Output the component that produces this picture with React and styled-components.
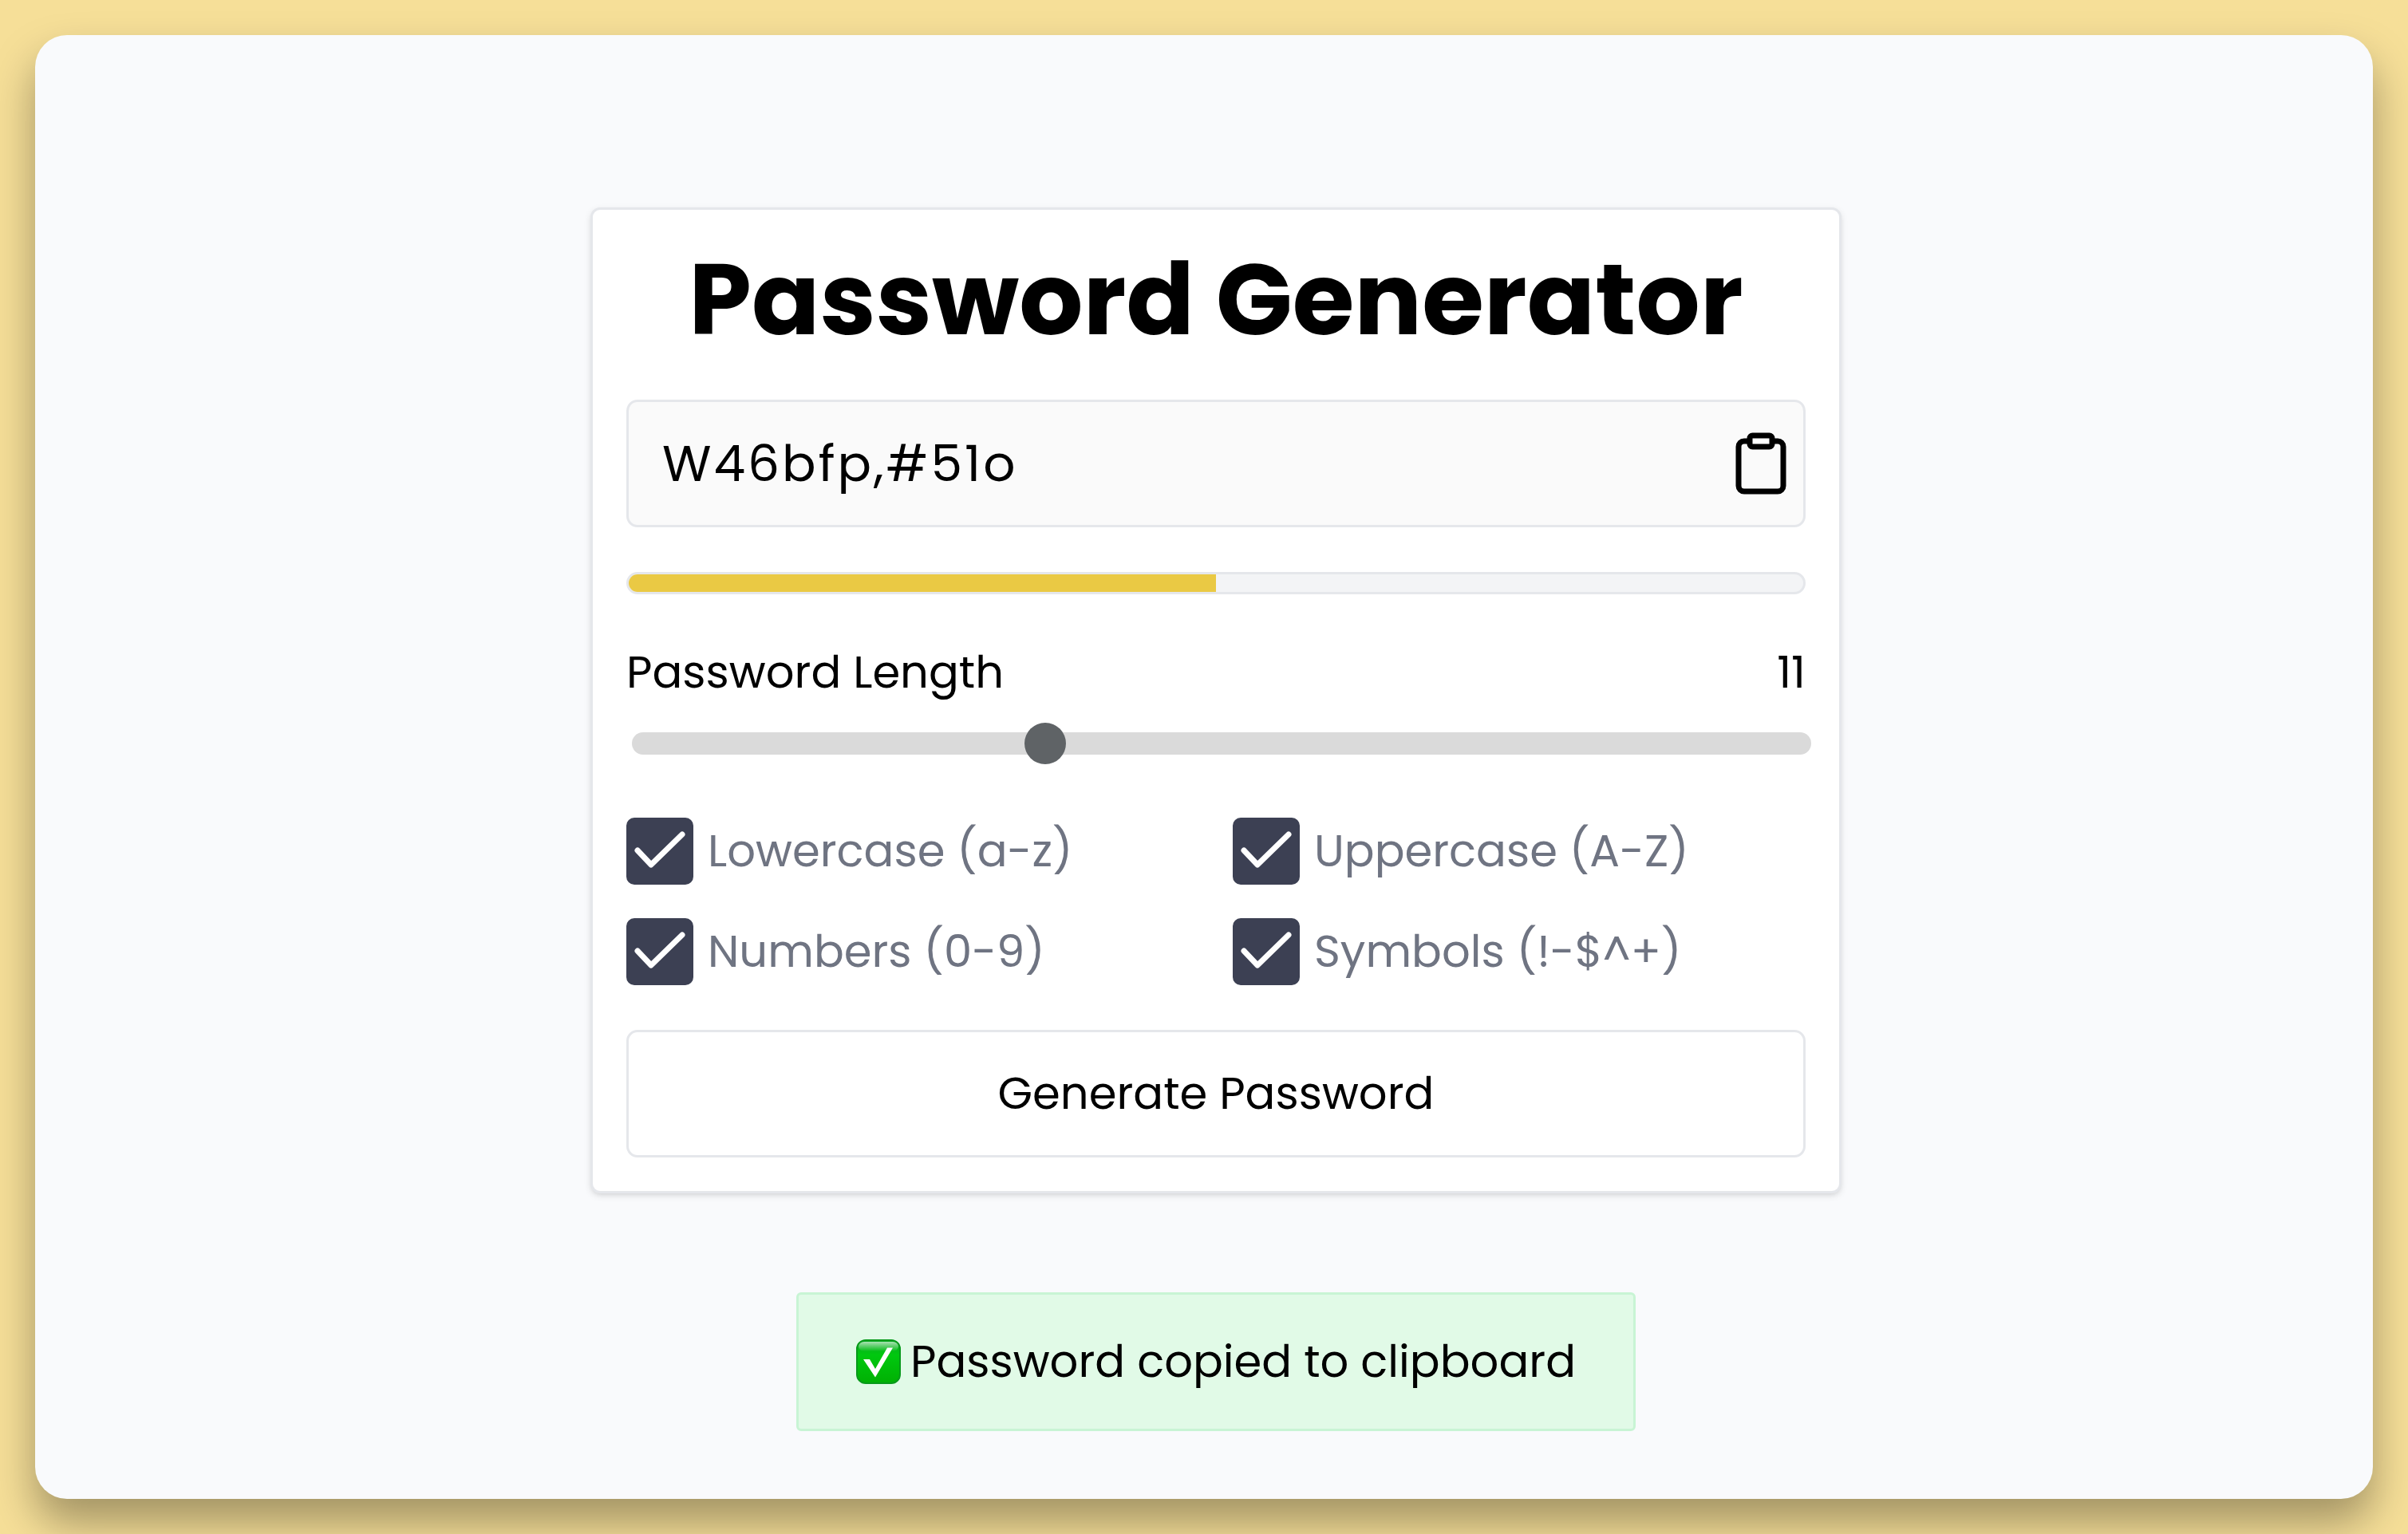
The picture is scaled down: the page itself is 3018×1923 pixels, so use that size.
import React, { useState } from "react";
import styled, { createGlobalStyle } from "styled-components";

const font = `Poppins, Inter, "Open Sans", sans-serif`;

const GlobalStyle = createGlobalStyle`
  *, *::before, *::after { box-sizing: border-box; }
  body { margin: 0; background: #f6df98; color: #000; font-family: ${font}; font-size: 56px; line-height: 84px; }
  button, input { font: inherit; color: inherit; }
`;

const Page = styled.div`
  min-height: 100vh;
  padding: 44px;
  display: flex;
`;

const Panel = styled.main`
  flex: 1;
  display: flex;
  flex-direction: column;
  align-items: center;
  gap: 124px;
  padding: 216px 0 84px 30px;
  border-radius: 40px;
  background: #f9fafc;
  box-shadow: 0 30px 54px rgba(0, 0, 0, 0.34);
`;

const Card = styled.form`
  width: 100%;
  max-width: 1568px;
  display: flex;
  flex-direction: column;
  gap: 56px;
  padding: 42px;
  border: 3px solid #e5e7eb;
  border-radius: 12px;
  background: #fff;
  box-shadow: 0 3px 8px rgba(0, 0, 0, 0.1), 0 3px 6px -3px rgba(0, 0, 0, 0.1);
`;

const Title = styled.h1`
  margin: 0;
  font-size: 126px;
  line-height: 140px;
  font-weight: 700;
  text-align: center;
`;

const Field = styled.div`
  display: flex;
  align-items: center;
  height: 160px;
  padding: 0 11px 0 42px;
  border: 3px solid #e5e7eb;
  border-radius: 14px;
  background: #fafafa;
`;

const PasswordInput = styled.input`
  flex: 1;
  min-width: 0;
  padding: 0;
  border: 0;
  outline: 0;
  background: transparent;
  font-size: 63px;
  letter-spacing: 3px;
`;

const CopyButton = styled.button`
  display: flex;
  padding: 0;
  border: 0;
  background: transparent;
  cursor: pointer;
`;

const Meter = styled.div`
  height: 28px;
  overflow: hidden;
  border: 3px solid #e5e7eb;
  border-radius: 14px;
  background: #f3f4f6;
`;

const MeterFill = styled.div`
  width: ${(p) => p.$percent}%;
  height: 100%;
  background: #eac944;
`;

const LengthGroup = styled.div`
  display: flex;
  flex-direction: column;
  gap: 21px;
  padding-bottom: 11px;
`;

const LengthRow = styled.div`
  display: flex;
  justify-content: space-between;
`;

const Slider = styled.input`
  appearance: none;
  width: 100%;
  height: 52px;
  margin: 0 0 0 7px;
  background: transparent;

  &::-webkit-slider-runnable-track {
    height: 28px;
    border-radius: 14px;
    background: #dadada;
  }

  &::-webkit-slider-thumb {
    appearance: none;
    width: 52px;
    height: 52px;
    margin-top: -12px;
    border-radius: 50%;
    background: #5f6366;
  }
`;

const Options = styled.div`
  display: grid;
  grid-template-columns: 1fr 1fr;
  gap: 42px;
`;

const Option = styled.label`
  display: flex;
  align-items: center;
  gap: 18px;
  color: #6f7482;
`;

const Box = styled.span`
  display: grid;
  width: 84px;
  height: 84px;

  > * { grid-area: 1 / 1; }
`;

const BoxInput = styled.input`
  appearance: none;
  width: 84px;
  height: 84px;
  margin: 0;
  border: 3px solid #3c4053;
  border-radius: 10px;

  &:checked { background: #3c4053; }
  &:not(:checked) + svg { visibility: hidden; }
`;

const BoxTick = styled.svg`
  pointer-events: none;
`;

const GenerateButton = styled.button`
  height: 160px;
  border: 3px solid #e5e7eb;
  border-radius: 14px;
  background: #fff;
  cursor: pointer;
`;

const Toast = styled.div`
  display: flex;
  align-items: center;
  justify-content: center;
  gap: 12px;
  min-width: 1052px;
  padding: 42px 70px;
  border: 3px solid #c8f4d4;
  border-radius: 6px;
  background: #e1fae7;
`;

const ClipboardIcon = () => (
  <svg width="84" height="84" viewBox="0 0 24 24" fill="none" stroke="#000" strokeWidth="2" strokeLinecap="round" strokeLinejoin="round" aria-hidden="true">
    <path d="M16 4h2a2 2 0 0 1 2 2v14a2 2 0 0 1-2 2H6a2 2 0 0 1-2-2V6a2 2 0 0 1 2-2h2" />
    <rect x="8" y="2" width="8" height="4" rx="1" fill="#fff" />
  </svg>
);

const CheckEmoji = () => (
  <svg width="56" height="56" viewBox="0 0 56 56" aria-hidden="true">
    <defs>
      <linearGradient id="body" x1="0" y1="0" x2="0" y2="1">
        <stop offset="0" stopColor="#0aa823" />
        <stop offset="0.35" stopColor="#00c80f" />
        <stop offset="1" stopColor="#00b003" />
      </linearGradient>
      <linearGradient id="gloss" x1="0" y1="0" x2="0" y2="1">
        <stop offset="0" stopColor="#fff" stopOpacity="0.65" />
        <stop offset="1" stopColor="#fff" stopOpacity="0" />
      </linearGradient>
    </defs>
    <rect x="1" y="1" width="54" height="54" rx="11" fill="url(#body)" stroke="#079a1a" strokeWidth="2" />
    <rect x="3" y="3" width="50" height="12" rx="7" fill="url(#gloss)" />
    <path d="M9 25h8l7 12L39 10.500h7L24 47.500z" fill="#fff" />
  </svg>
);

const choices = ["Lowercase (a-z)", "Uppercase (A-Z)", "Numbers (0-9)", "Symbols (!-$^+)"];

export default function App() {
  const [length, setLength] = useState(11);
  return (
    <>
      <GlobalStyle />
      <Page>
        <Panel>
          <Card onSubmit={(e) => e.preventDefault()}>
            <Title>Password Generator</Title>
            <Field>
              <PasswordInput type="text" aria-label="Password" readOnly value="W46bfp,#51o" />
              <CopyButton type="button" aria-label="Copy password">
                <ClipboardIcon />
              </CopyButton>
            </Field>
            <Meter role="meter" aria-label="Password strength" aria-valuemin={0} aria-valuemax={100} aria-valuenow={50}>
              <MeterFill $percent={50} />
            </Meter>
            <LengthGroup>
              <LengthRow>
                <label htmlFor="length">Password Length</label>
                <output htmlFor="length">{length}</output>
              </LengthRow>
              <Slider id="length" type="range" min="1" max="30" value={length} onChange={(e) => setLength(Number(e.target.value))} />
            </LengthGroup>
            <Options>
              {choices.map((text) => (
                <Option key={text}>
                  <Box>
                    <BoxInput type="checkbox" defaultChecked />
                    <BoxTick viewBox="0 0 84 84" fill="none" stroke="#fff" strokeWidth="7" strokeLinecap="round" strokeLinejoin="round">
                      <path d="M14 41L31 59L70 21" />
                    </BoxTick>
                  </Box>
                  {text}
                </Option>
              ))}
            </Options>
            <GenerateButton type="submit">Generate Password</GenerateButton>
          </Card>
          <Toast role="status">
            <CheckEmoji />
            <span>Password copied to clipboard</span>
          </Toast>
        </Panel>
      </Page>
    </>
  );
}
